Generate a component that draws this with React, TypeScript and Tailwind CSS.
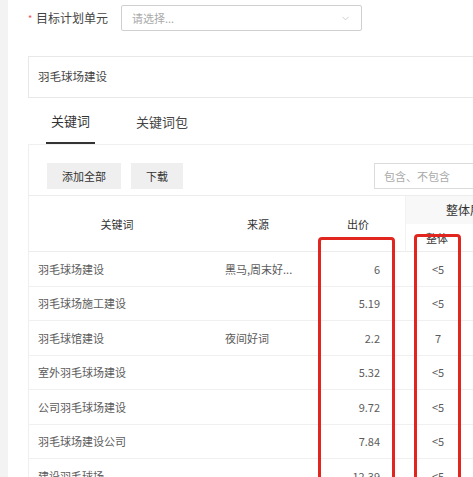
import { ChevronDown } from "lucide-react";

const rows = [
  { kw: "羽毛球场建设", src: "黑马,周末好...", price: "6", all: "<5" },
  { kw: "羽毛球场施工建设", src: "", price: "5.19", all: "<5" },
  { kw: "羽毛球馆建设", src: "夜间好词", price: "2.2", all: "7" },
  { kw: "室外羽毛球场建设", src: "", price: "5.32", all: "<5" },
  { kw: "公司羽毛球场建设", src: "", price: "9.72", all: "<5" },
  { kw: "羽毛球场建设公司", src: "", price: "7.84", all: "<5" },
  { kw: "建设羽毛球场", src: "", price: "12.39", all: "<5" },
];

const font = { fontFamily: '"Noto Sans CJK SC", "Noto Sans", sans-serif' };

export default function App() {
  return (
    <div
      className="relative w-[473px] h-[477px] overflow-hidden bg-white flex text-[11px] text-[#5c5c5c]"
      style={font}
    >
      {/* left rail */}
      <div className="w-2 shrink-0 bg-[#f3f3f3]" />

      <div className="flex-1 pl-5 min-w-0">
        {/* plan unit */}
        <div className="flex items-center h-[26px] mt-[5px]">
          <span className="w-2 text-[#f05050] text-[9px] leading-none">*</span>
          <span className="text-[#444] text-[12px] leading-none w-[85px]">目标计划单元</span>
          <div className="flex items-center justify-between w-[241px] h-[26px] border border-[#cfcfcf] rounded-[2px] px-[10px]">
            <span className="text-[#aaa]">请选择...</span>
            <ChevronDown size={11} strokeWidth={1.5} className="text-[#bbb]" />
          </div>
        </div>

        {/* search */}
        <div className="mt-[25px] h-[42px] w-[520px] border border-[#e8e8e8] flex items-center pl-[9px] text-[#444] text-[11.5px]">
          羽毛球场建设
        </div>

        {/* tabs */}
        <div className="flex h-[46px] pl-[18px]">
          <div className="w-[49px] flex items-center justify-center pt-[2px] border-b-2 border-[#333] text-[13px] text-[#333]">
            关键词
          </div>
          <div className="ml-[36px] w-[62px] flex items-center justify-center pt-[2px] text-[13px] text-[#444]">
            关键词包
          </div>
        </div>

        {/* panel */}
        <div className="border-l border-t border-[#efefef] w-[520px]">
          <div className="flex items-center pt-[18px] pl-[18px] h-[44px]">
            <div className="w-[74px] h-[26px] bg-[#efefef] flex items-center justify-center text-[#333]">
              添加全部
            </div>
            <div className="ml-[10px] w-[52px] h-[26px] bg-[#efefef] flex items-center justify-center text-[#333]">
              下载
            </div>
            <div className="ml-[191px] w-[140px] h-[26px] border border-[#dcdcdc] flex items-center pl-[9px] text-[#aaa]">
              包含、不包含
            </div>
          </div>

          {/* table */}
          <div className="mt-[6px] border-t border-[#ececec]">
            <div className="grid grid-cols-[176px_106px_95px_64px_1fr] h-[56px] border-b border-[#ececec] text-[#333]">
              <div className="flex items-center justify-center">关键词</div>
              <div className="flex items-center justify-center">来源</div>
              <div className="flex items-center justify-center border-r border-[#f2f2f2]">出价</div>
              <div className="col-span-2 flex flex-col">
                <div className="h-[28px] bg-[#f8f8f8] flex items-center pl-[40px] text-[12px] whitespace-nowrap">整体展现量</div>
                <div className="h-[28px] flex items-center pl-[20px]">整体</div>
              </div>
            </div>

            {rows.map((r) => (
              <div
                key={r.kw}
                className="grid grid-cols-[176px_106px_95px_64px_1fr] h-[34.5px] border-b border-[#f0f0f0] items-center"
              >
                <div className="pl-[9px]">{r.kw}</div>
                <div className="pl-[20px]">{r.src}</div>
                <div className="text-right pr-[26px]">{r.price}</div>
                <div className="text-center">{r.all}</div>
                <div />
              </div>
            ))}
          </div>
        </div>
      </div>

      {/* annotation boxes */}
      <div className="absolute left-[318px] top-[237px] w-[77px] h-[260px] border-[3px] border-[#e0261f] rounded-[4px]" />
      <div className="absolute left-[414px] top-[234px] w-[47px] h-[260px] border-[3px] border-[#e0261f] rounded-[4px]" />
    </div>
  );
}
